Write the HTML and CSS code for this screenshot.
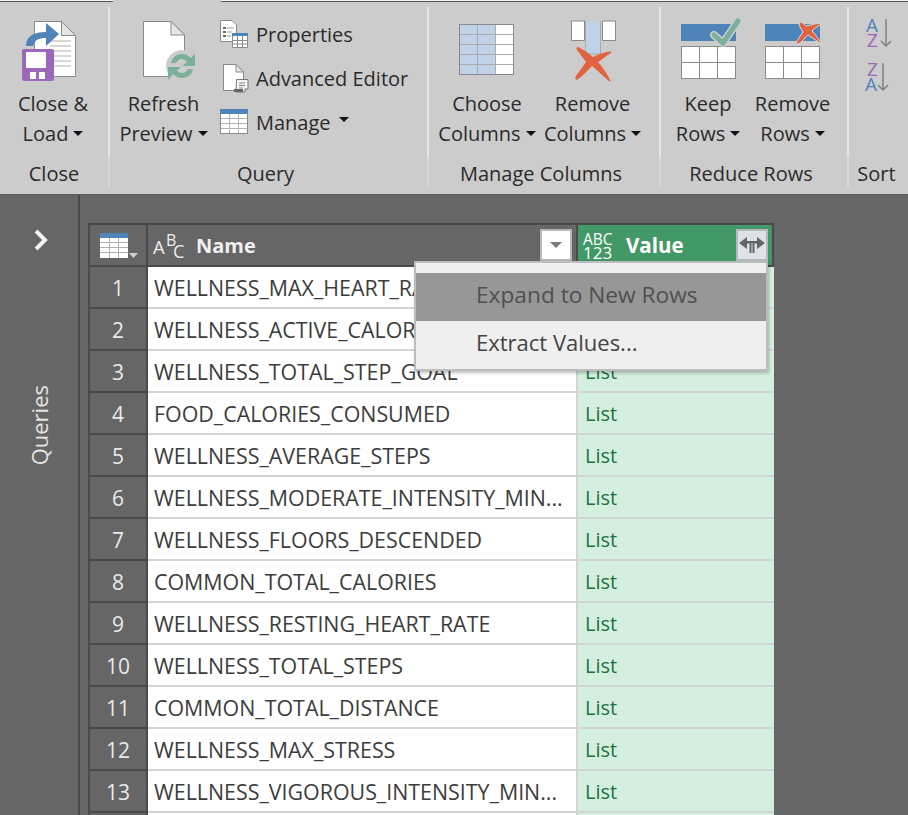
FILE: index.html
```html
<!DOCTYPE html>
<html lang="en">
<head>
<meta charset="utf-8">
<title>Power Query Editor</title>
<link rel="stylesheet" href="styles.css">
</head>
<body>
<header class="ribbon">
  <div class="tabline"><span class="tl tl-a"></span><span class="tl tl-gap"></span><span class="tl tl-b"></span></div>
  <div class="groups">
    <section class="group g-close">
      <div class="group-body">
        <button class="big w106">
          <svg class="big-ico" viewBox="21 20 64 64">
            <path d="M34.500 21.500H61.500L75.500 35.500V76.500H34.500Z" fill="#fff" stroke="#8a8a8a"/>
            <path d="M61.500 21.500V35.500H75.500Z" fill="#e6e6e6" stroke="#8a8a8a"/>
            <path d="M50 41H71M50 46H71M50 51H71M50 56H71M50 61H71M50 66H71" stroke="#b0b0b0" stroke-width="1"/>
            <path d="M26 46C26 36 34 32 46 32V23L59 34L46 46V38C38 38 35 40 33 46Z" fill="#4e84b9"/>
            <rect x="22" y="49" width="32" height="32" rx="2" fill="#9b69b8"/>
            <rect x="26" y="52" width="20" height="16" rx="1" fill="#fff"/>
            <path d="M30 72H45V79H30Z" fill="#fff"/><path d="M36 72H39V79H36Z" fill="#9b69b8"/>
          </svg>
          <span class="big-txt">Close &amp;<br>Load<i class="caret"></i></span>
        </button>
      </div>
      <div class="group-label">Close</div>
    </section>

    <section class="group g-query">
      <div class="group-body">
        <button class="big w107">
          <svg class="big-ico" viewBox="132 20 64 64">
            <path d="M143.500 21.500H171L184.500 35V76.500H143.500Z" fill="#fff" stroke="#8a8a8a"/>
            <path d="M171 21.500V35H184.500Z" fill="#e6e6e6" stroke="#8a8a8a"/>
            <circle cx="182" cy="66" r="16" fill="#ccc"/>
            <path d="M171 63C172 57 177 54 182 54C186 54 189 56 191 58L195 53V66H182L187 62C185 60 184 59 182 59C179 59 177 61 176 63Z" fill="#7bb09b"/>
            <path d="M193 69C192 75 187 78 182 78C178 78 175 76 173 74L168 80V67H181L177 71C179 72 180 73 182 73C185 73 187 71 188 69Z" fill="#7bb09b"/>
          </svg>
          <span class="big-txt">Refresh<br>Preview<i class="caret"></i></span>
        </button>
        <div class="smalls">
          <button class="small">
            <svg class="small-ico" viewBox="220 19 28 28">
              <path d="M220.500 19.500H232L236.500 24V40.500H220.500Z" fill="#fff" stroke="#8a8a8a"/>
              <path d="M223 27H226M223 31H226M223 35H226" stroke="#666" stroke-width="2"/>
              <path d="M227 27H234M227 31H232M227 35H231" stroke="#999"/>
              <rect x="232" y="32" width="16" height="15" fill="#fff"/>
              <rect x="232" y="32" width="16" height="3" fill="#4e84b9"/>
              <path d="M232.500 35V46.500H247.500V35M232 39.500H248M232 43H248M237.500 35V47M242.500 35V47" fill="none" stroke="#8a8a8a"/>
            </svg>
            <span>Properties</span>
          </button>
          <button class="small">
            <svg class="small-ico" viewBox="220 63 28 28">
              <path d="M223.500 63.500H236L243.500 71V89.500H223.500Z" fill="#fff" stroke="#8a8a8a"/>
              <path d="M236 63.500V71H243.500Z" fill="#e6e6e6" stroke="#8a8a8a"/>
              <path d="M236.500 78.500H248V88H245V91H236Z" fill="#f4f4f4" stroke="#777"/>
              <path d="M239 82H245M239 84.500H245M239 87H243" stroke="#888"/>
              <rect x="234" y="88" width="9" height="3" fill="#666"/>
            </svg>
            <span>Advanced Editor</span>
          </button>
          <button class="small">
            <svg class="small-ico" viewBox="220 107 28 28">
              <rect x="220.500" y="108.500" width="27" height="24" fill="#fff" stroke="#8a8a8a"/>
              <rect x="220" y="108" width="28" height="5" fill="#4e84b9"/>
              <path d="M221 117.500H247M221 122.500H247M221 127.500H247M229.500 113V132M238.500 113V132" stroke="#b4b4b4"/>
            </svg>
            <span>Manage</span><i class="caret caret-s"></i>
          </button>
        </div>
      </div>
      <div class="group-label">Query</div>
    </section>

    <section class="group g-cols">
      <div class="group-body">
        <button class="big w116">
          <svg class="big-ico" viewBox="456 20 64 64">
            <rect x="460.500" y="24.500" width="54" height="50" fill="#fff" stroke="#8a8a8a"/>
            <rect x="461" y="25" width="36" height="49" fill="#bfd2e8"/>
            <path d="M461 34.500H514M461 44.500H514M461 54.500H514M461 64.500H514M478.500 25V74M496.500 25V74" stroke="#ababab"/>
          </svg>
          <span class="big-txt">Choose<br>Columns<i class="caret"></i></span>
        </button>
        <button class="big w95">
          <svg class="big-ico" viewBox="561 20 64 64">
            <path d="M571.500 21V40.500H584.500V21ZM602.500 21V40.500H615.500V21Z" fill="#fff" stroke="#8a8a8a"/>
            <path d="M585.500 21V54H600.500V21" fill="#bfd2e8" stroke="#ababab"/>
            <path d="M578 50C576 48 578 47 580 49C585 51 589 55 593 58C598 55 604 53 611 52C605 56 600 60 597 62C601 66 605 72 610 81C603 75 598 70 592 65C587 70 583 75 577 79C574 78 578 75 587 62C584 58 581 54 578 50Z" fill="#e1633f" stroke="#e1633f" stroke-width="1.500"/>
          </svg>
          <span class="big-txt">Remove<br>Columns<i class="caret"></i></span>
        </button>
      </div>
      <div class="group-label">Manage Columns</div>
    </section>

    <section class="group g-rows">
      <div class="group-body">
        <button class="big w94">
          <svg class="big-ico" viewBox="676 18 64 64">
            <rect x="681" y="22" width="55" height="17" fill="#4e84b9"/>
            <rect x="681.500" y="44.500" width="54" height="32" fill="#fff" stroke="#8a8a8a"/>
            <path d="M681 60.500H736M699.500 45V76M717.500 45V76" stroke="#8a8a8a"/>
            <path d="M714 33L723 41L738 19" fill="none" stroke="#ccc" stroke-width="8" stroke-linecap="round" stroke-linejoin="round"/>
            <path d="M714 33L723 41L738 19" fill="none" stroke="#7bb09b" stroke-width="5" stroke-linecap="round"/>
          </svg>
          <span class="big-txt">Keep<br>Rows<i class="caret"></i></span>
        </button>
        <button class="big w75">
          <svg class="big-ico" viewBox="761 18 64 64">
            <rect x="765" y="22" width="55" height="17" fill="#4e84b9"/>
            <rect x="765.500" y="44.500" width="54" height="32" fill="#fff" stroke="#8a8a8a"/>
            <path d="M765 60.500H820M783.500 45V76M801.500 45V76" stroke="#8a8a8a"/>
            <path d="M799 21C801 19 804 22 806 24C811 23 817 21 823 21C818 24 815 26 812 29C816 33 819 38 823 43C818 40 813 36 808 33C804 37 801 41 798 42C795 42 796 40 803 30C801 27 799 24 799 21Z" fill="#e1633f" stroke="#ddd" stroke-width="1"/>
          </svg>
          <span class="big-txt">Remove<br>Rows<i class="caret"></i></span>
        </button>
      </div>
      <div class="group-label">Reduce Rows</div>
    </section>

    <section class="group g-sort">
      <div class="group-body sort-body">
        <svg class="sort-ico" viewBox="864 18 30 32">
          <text class="sl sl-b" x="866" y="32">A</text><text class="sl sl-p" x="867" y="47">Z</text>
          <path d="M886 19V46M881 41L886 46L891 41" fill="none" stroke="#808080" stroke-width="1.500"/>
        </svg>
        <svg class="sort-ico" viewBox="864 61 30 32">
          <text class="sl sl-p" x="867" y="76">Z</text><text class="sl sl-b" x="865" y="91">A</text>
          <path d="M883 63V90M878 85L883 90L888 85" fill="none" stroke="#808080" stroke-width="1.500"/>
        </svg>
      </div>
      <div class="group-label">Sort</div>
    </section>
  </div>
</header>

<main class="main">
  <aside class="sidebar">
    <svg class="chev" viewBox="0 0 16 22"><path d="M3 2L12 11L3 20" fill="none" stroke="#f2f2f2" stroke-width="4"/></svg>
    <div class="queries">Queries</div>
  </aside>
  <div class="content">
    <div class="tablewrap">
      <div class="grid">
        <div class="hd hd-idx">
          <svg class="tbl-ico" viewBox="0 0 38 26">
            <rect x="0" y="0" width="28" height="25" fill="#fff"/><rect x="0" y="0" width="28" height="5" fill="#4e84b9"/>
            <path d="M0 9.500H28M0 14.500H28M0 19.500H28M9.500 5V25M18.500 5V25" stroke="#b0b0b0"/>
            <path d="M29 20H38L33.500 25Z" fill="#cfcfcf"/>
          </svg>
        </div>
        <div class="hd hd-name">
          <span class="abc"><span>A</span><sup>B</sup><sub>C</sub></span>
          <span class="hd-title">Name</span>
          <span class="filter"><i></i></span>
        </div>
        <div class="hd hd-val">
          <span class="abc123">ABC<br><b>123</b></span>
          <span class="hd-title">Value</span>
          <span class="expand"><svg viewBox="0 0 26 16"><path d="M0 6L8 0V12ZM26 6L18 0V12Z" fill="#666"/><path d="M8 4H18V6.500H15.500V16H13.500V6.500H12.500V16H10.500V6.500H8" fill="#666"/></svg></span>
        </div>

        <div class="idx">1</div><div class="name">WELLNESS_MAX_HEART_RATE</div><div class="val">List</div>
        <div class="idx">2</div><div class="name">WELLNESS_ACTIVE_CALORIES</div><div class="val">List</div>
        <div class="idx">3</div><div class="name">WELLNESS_TOTAL_STEP_GOAL</div><div class="val">List</div>
        <div class="idx">4</div><div class="name">FOOD_CALORIES_CONSUMED</div><div class="val">List</div>
        <div class="idx">5</div><div class="name">WELLNESS_AVERAGE_STEPS</div><div class="val">List</div>
        <div class="idx">6</div><div class="name">WELLNESS_MODERATE_INTENSITY_MIN...</div><div class="val">List</div>
        <div class="idx">7</div><div class="name">WELLNESS_FLOORS_DESCENDED</div><div class="val">List</div>
        <div class="idx">8</div><div class="name">COMMON_TOTAL_CALORIES</div><div class="val">List</div>
        <div class="idx">9</div><div class="name">WELLNESS_RESTING_HEART_RATE</div><div class="val">List</div>
        <div class="idx">10</div><div class="name">WELLNESS_TOTAL_STEPS</div><div class="val">List</div>
        <div class="idx">11</div><div class="name">COMMON_TOTAL_DISTANCE</div><div class="val">List</div>
        <div class="idx">12</div><div class="name">WELLNESS_MAX_STRESS</div><div class="val">List</div>
        <div class="idx">13</div><div class="name">WELLNESS_VIGOROUS_INTENSITY_MIN...</div><div class="val">List</div>
        <div class="idx"></div><div class="name"></div><div class="val"></div>
      </div>
      <div class="menu">
        <div class="menu-item disabled">Expand to New Rows</div>
        <div class="menu-item extract">Extract Values...</div>
      </div>
    </div>
  </div>
</main>
</body>
</html>
```
FILE: styles.css
```css
* { box-sizing: border-box; }
html, body { margin: 0; padding: 0; height: 815px; overflow: hidden; }
body { background: #666; font-family: "Open Sans", "Noto Sans", sans-serif; font-size: 20px; color: #2b2b2b; display: flex; flex-direction: column; }
button { font: inherit; color: inherit; background: none; border: 0; padding: 0; margin: 0; }

.ribbon { background: #ccc; height: 195px; flex: none; border-bottom: 1px solid #5a5a5a; }
.tabline { display: flex; height: 2px; }
.tl-a { width: 113px; background: #f4f4f4; border-bottom: 1px solid #555; }
.tl-gap { width: 108px; }
.tl-b { flex: 1; background: #f4f4f4; border-bottom: 1px solid #555; }
.groups { display: flex; height: 192px; }
.group { display: flex; flex-direction: column; border-right: 2px solid #e2e2e2; border-image: linear-gradient(#e6e6e6 0 148px, #d8d8d8 148px) 1; height: 180px; margin-top: 5px; }
.g-close { width: 110px; }
.g-query { width: 319px; }
.g-cols { width: 232px; }
.g-rows { width: 188px; }
.g-sort { flex: 1; border-right: 0; }
.group-body { display: flex; height: 150px; flex: none; align-items: flex-start; }
.group-label { text-align: center; line-height: 30px; height: 27px; margin-top: 2px; flex: none; }
.g-query .group-label, .g-cols .group-label, .g-rows .group-label { padding-right: 6px; }
.g-sort .group-label { padding-right: 4px; }

.big { display: flex; flex-direction: column; align-items: center; padding-top: 13px; flex: none; }
.w106 { width: 106px; } .w107 { width: 107px; } .w116 { width: 116px; } .w95 { width: 95px; } .w94 { width: 94px; } .w75 { width: 75px; }
.big-ico { width: 64px; height: 64px; display: block; overflow: visible; }
.big-txt { display: block; line-height: 30px; margin-top: 5px; text-align: center; white-space: nowrap; }
.caret { display: inline-block; width: 0; height: 0; border-left: 5px solid transparent; border-right: 5px solid transparent; border-top: 5px solid #111; margin-left: 5px; vertical-align: 5px; }

.smalls { display: flex; flex-direction: column; margin-left: 3px; padding-top: 5px; }
.small { display: flex; align-items: center; height: 44px; white-space: nowrap; }
.small-ico { width: 28px; height: 28px; margin-right: 8px; flex: none; overflow: visible; }
.caret-s { margin-left: 8px; margin-top: -6px; }

.sort-body { flex-direction: column; align-items: flex-start; padding: 11px 0 0 15px; gap: 11px; }
.sort-ico { width: 30px; height: 32px; display: block; overflow: visible; }
.sl { font-family: "Open Sans", sans-serif; font-size: 19px; }
.sl-b { fill: #4e84b9; } .sl-p { fill: #9b69b8; }

.main { flex: 1; display: flex; min-height: 0; }
.sidebar { width: 80px; flex: none; border-right: 2px solid #4a4a4a; display: flex; flex-direction: column; align-items: center; padding-top: 34px; }
.chev { width: 16px; height: 22px; margin-left: 4px; display: block; }
.queries { writing-mode: vertical-rl; transform: rotate(180deg); color: #e4e4e4; font-size: 22px; margin-top: 134px; line-height: 30px; }

.content { flex: 1; padding: 28px 0 0 8px; min-width: 0; }
.tablewrap { position: relative; width: 686px; }
.grid { display: grid; grid-template-columns: 60px 430px 196px; grid-template-rows: 44px; grid-auto-rows: 42px; background: #4a4a4a; }
.hd { background: #666; border: 2px solid #4a4a4a; color: #f0f0f0; display: flex; align-items: center; height: 44px; border-left: 0; }
.hd-idx { border-left: 2px solid #4a4a4a; padding-left: 10px; padding-top: 1px; }
.tbl-ico { width: 38px; height: 26px; }
.hd-name { padding-left: 5px; position: relative; }
.abc { color: #eee; position: relative; width: 32px; height: 26px; display: block; line-height: 1; }
.abc span { position: absolute; left: 0; top: 6px; font-size: 18.500px; }
.abc sup { position: absolute; left: 13px; top: 0; font-size: 16px; }
.abc sub { position: absolute; left: 20px; top: 10px; font-size: 18px; }
.hd-title { font-weight: 700; margin-left: 11px; font-size: 20px; }
.filter { position: absolute; right: 4px; top: 4px; width: 32px; height: 32px; background: #fff; border: 2px solid #b8b8b8; display: flex; align-items: center; justify-content: center; }
.filter i { width: 0; height: 0; border-left: 6px solid transparent; border-right: 6px solid transparent; border-top: 6px solid #7a7a7a; }
.hd-val { background: #439867; padding-left: 5px; position: relative; color: #fff; }
.abc123 { font-size: 15.500px; line-height: 14px; display: block; width: 32px; text-align: left; margin-top: 2px; }
.abc123 b { font-weight: 400; font-size: 17px; }
.hd-val .hd-title { margin-left: 11px; color: #fff; font-size: 20.500px; }
.expand { position: absolute; right: 4px; top: 4px; width: 32px; height: 32px; background: #dfe2e8; border: 2px solid #b8b8b8; display: flex; align-items: center; justify-content: center; }
.expand svg { width: 26px; height: 16px; }

.idx { background: #666; border: 2px solid #4a4a4a; border-top: 0; color: #eaeaea; display: flex; align-items: center; justify-content: center; font-size: 21px; padding-top: 2px; }
.name { background: #fff; border-bottom: 2px solid #d4d4d4; border-right: 2px solid #d4d4d4; padding-left: 6px; display: flex; align-items: center; color: #3c3c3c; white-space: nowrap; overflow: hidden; font-size: 21.400px; }
.val { background: #d4efdf; border-bottom: 2px solid #d4d4d4; color: #1f7040; padding-left: 7px; display: flex; align-items: center; }

.menu { position: absolute; left: 326px; top: 38px; width: 354px; height: 110px; background: #efefef; border: 2px solid #bcbcbc; padding-top: 10px; box-shadow: 1px 2px 3px rgba(0,0,0,.25); }
.menu-item { height: 48px; line-height: 44px; padding-left: 60px; font-size: 22px; color: #444; }
.menu-item.extract { line-height: 42px; }
.menu-item.disabled { background: #979797; color: #505050; font-size: 22.700px; }
```
